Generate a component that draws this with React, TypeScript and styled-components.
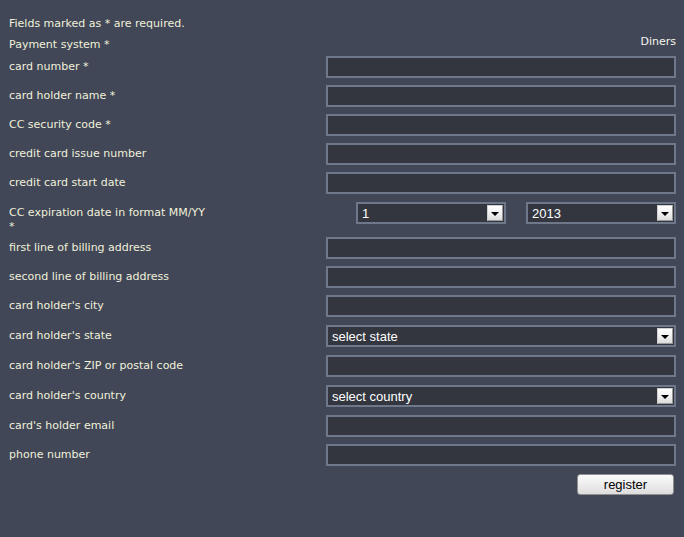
import React from "react";
import styled, { createGlobalStyle } from "styled-components";

const GlobalStyle = createGlobalStyle`
  html, body {
    margin: 0;
    padding: 0;
    background: #414757;
  }
  * { box-sizing: border-box; }
`;

const Page = styled.div`
  width: 684px;
  min-height: 537px;
  background: #414757;
  padding: 13px 8px 0 9px;
  font-family: "DejaVu Sans", Tahoma, sans-serif;
  font-size: 11px;
  color: #f0f0da;
`;

const Notice = styled.div`
  line-height: 21px;
  height: 21px;
`;

const PaymentRow = styled.div`
  display: flex;
  justify-content: space-between;
  align-items: flex-start;
  height: 22px;
  line-height: 21px;
`;

const PaymentValue = styled.span`
  line-height: 15px;
  color: #f6f6ee;
`;

const FieldRow = styled.div<{ $gap: number }>`
  display: grid;
  grid-template-columns: 1fr 350px;
  align-items: start;
  margin-bottom: ${(p) => p.$gap}px;
`;

const Label = styled.div`
  padding-top: 4px;
  line-height: 14px;
`;

const TextInput = styled.input`
  display: block;
  width: 350px;
  height: 22px;
  margin: 0;
  border: 2px solid #6f778a;
  background: #33363f;
  color: #ffffff;
  font-family: "Liberation Sans", Arial, sans-serif;
  font-size: 13px;
  padding: 0 4px;
  outline: none;
`;

const SelectGroup = styled.div`
  display: flex;
  justify-content: flex-end;
  gap: 20px;
`;

const SelectBox = styled.div<{ $width: number }>`
  display: flex;
  align-items: center;
  justify-content: space-between;
  width: ${(p) => p.$width}px;
  height: 22px;
  border: 2px solid #6f778a;
  background: #33363f;
  color: #ffffff;
  font-family: "Liberation Sans", Arial, sans-serif;
  font-size: 13px;
  padding: 0 1px 0 4px;
`;

const SelectText = styled.span`
  line-height: 18px;
  padding-top: 1px;
`;

const ArrowButton = styled.span`
  display: flex;
  align-items: center;
  justify-content: center;
  width: 16px;
  height: 16px;
  background: linear-gradient(#ffffff, #f2f2f2 50%, #dcdcdc);
  border: 1px solid #9a9a9a;
  border-top-color: #d0d0d0;
  border-left-color: #d0d0d0;
`;

const Triangle = styled.span`
  width: 0;
  height: 0;
  margin-top: 2px;
  border-left: 4px solid transparent;
  border-right: 4px solid transparent;
  border-top: 4px solid #000000;
`;

const ButtonRow = styled.div`
  display: flex;
  justify-content: flex-end;
  padding-right: 2px;
`;

const RegisterButton = styled.button`
  width: 97px;
  height: 21px;
  padding: 0;
  font-family: "Liberation Sans", Arial, sans-serif;
  font-size: 13px;
  color: #000000;
  background: linear-gradient(#fbfbfb, #ededed 50%, #dddddd);
  border: 1px solid #8f8f8f;
  border-radius: 3px;
`;

const Select = ({ value, width }: { value: string; width: number }) => (
  <SelectBox $width={width}>
    <SelectText>{value}</SelectText>
    <ArrowButton>
      <Triangle />
    </ArrowButton>
  </SelectBox>
);

type Field =
  | { label: string; kind: "input"; gap: number }
  | { label: string; kind: "select"; value: string; gap: number }
  | { label: string; kind: "date"; gap: number };

const fields: Field[] = [
  { label: "card number *", kind: "input", gap: 7 },
  { label: "card holder name *", kind: "input", gap: 7 },
  { label: "CC security code *", kind: "input", gap: 7 },
  { label: "credit card issue number", kind: "input", gap: 7 },
  { label: "credit card start date", kind: "input", gap: 8 },
  { label: "CC expiration date in format MM/YY *", kind: "date", gap: 3 },
  { label: "first line of billing address", kind: "input", gap: 7 },
  { label: "second line of billing address", kind: "input", gap: 7 },
  { label: "card holder's city", kind: "input", gap: 8 },
  { label: "card holder's state", kind: "select", value: "select state", gap: 8 },
  { label: "card holder's ZIP or postal code", kind: "input", gap: 8 },
  { label: "card holder's country", kind: "select", value: "select country", gap: 8 },
  { label: "card's holder email", kind: "input", gap: 7 },
  { label: "phone number", kind: "input", gap: 8 },
];

const DateLabel = styled(Label)`
  width: 215px;
`;

export default function App() {
  return (
    <>
      <GlobalStyle />
      <Page>
        <Notice>Fields marked as * are required.</Notice>
        <PaymentRow>
          <span>Payment system *</span>
          <PaymentValue>Diners</PaymentValue>
        </PaymentRow>
        {fields.map((f) => (
          <FieldRow key={f.label} $gap={f.gap}>
            {f.kind === "date" ? (
              <DateLabel>
                CC expiration date in format MM/YY
                <br />*
              </DateLabel>
            ) : (
              <Label>{f.label}</Label>
            )}
            {f.kind === "input" && <TextInput type="text" />}
            {f.kind === "select" && <Select value={f.value} width={350} />}
            {f.kind === "date" && (
              <SelectGroup>
                <Select value="1" width={150} />
                <Select value="2013" width={150} />
              </SelectGroup>
            )}
          </FieldRow>
        ))}
        <ButtonRow>
          <RegisterButton>register</RegisterButton>
        </ButtonRow>
      </Page>
    </>
  );
}
